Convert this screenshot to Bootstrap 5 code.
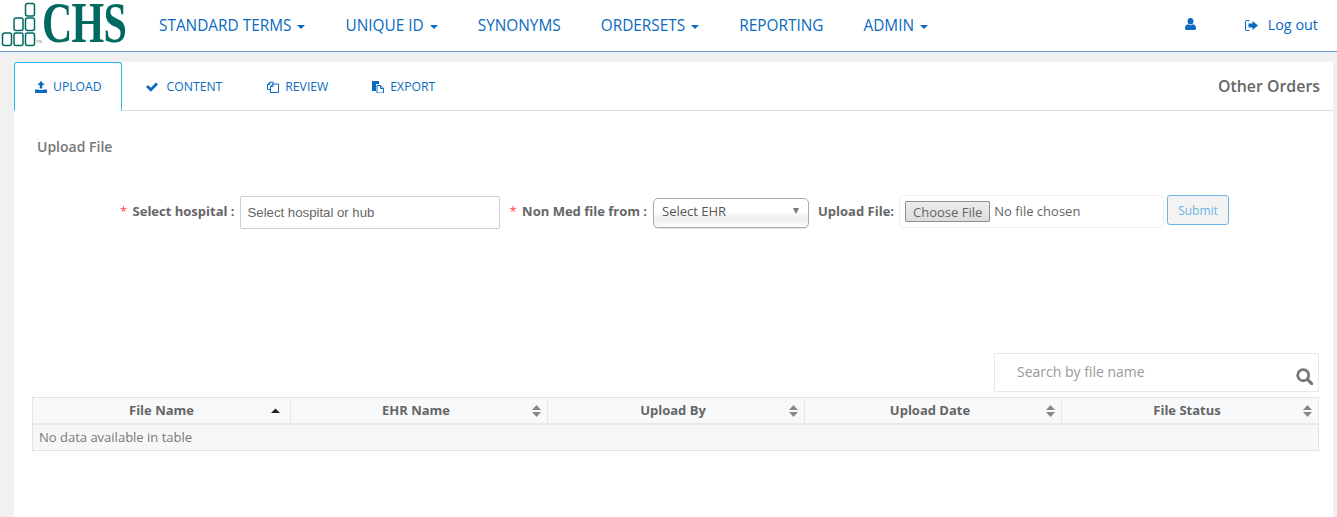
<!DOCTYPE html>
<html lang="en">
<head>
  <meta charset="UTF-8">
  <meta name="viewport" content="width=device-width, initial-scale=1.0">
  <title>Other Orders - Upload</title>
  <link href="https://cdn.jsdelivr.net/npm/bootstrap@5.3.0/dist/css/bootstrap.min.css" rel="stylesheet">
  <style>
    body {
      font-family: "Open Sans", sans-serif;
      background-color: #f1f1f1;
      color: #666;
      font-size: 13px;
      overflow: hidden;
    }

    /* top bar */
    .top-bar {
      height: 52px;
      padding: 0;
      background: #fff;
      border-bottom: 1px solid #6b9fcf;
      flex-wrap: nowrap;
    }
    .brand-box { width: 139px; height: 51px; flex: none; }
    .brand-logo { flex: none; margin-top: 1px; }
    .brand-name {
      font-family: "Liberation Serif", serif;
      font-weight: 700;
      font-size: 56px;
      line-height: 46px;
      color: #006a60;
      flex: none;
      white-space: nowrap;
      transform: scaleX(.75);
      transform-origin: left center;
      letter-spacing: -1px;
      margin: 0 -40px 0 0;
    }
    .top-link {
      color: #0a6abf;
      font-size: 15.38px;
      line-height: 51px;
      padding: 0 20px;
      text-decoration: none;
      white-space: nowrap;
    }
    .top-link:hover { color: #0a6abf; }
    .caret-down {
      display: inline-block;
      border-top: 4px solid #0a6abf;
      border-left: 4px solid transparent;
      border-right: 4px solid transparent;
      margin-left: 6px;
      vertical-align: 2px;
    }
    .icon-user { margin-right: 49px; margin-top: -2px; }
    .logout-link { padding: 0 19px 0 0; font-size: 14.4px; line-height: 50px; }
    .logout-link svg { margin-right: 10px; vertical-align: -1px; }

    /* panel and tabs */
    .main-panel {
      margin: 10px 4px 0 14px;
      height: 455px;
      background: #fff;
    }
    .tab-row { border-bottom: 1px solid #ddd; height: 49px; }
    .tab-row .nav-tabs { border-bottom: 0; flex-wrap: nowrap; }
    .tab-row .nav-item { margin-left: 2px; }
    .tab-row .nav-item:first-child { margin-left: 0; }
    .tab-row .nav-link {
      height: 49px;
      padding: 0 20px;
      border: 1px solid transparent;
      border-radius: 3px 3px 0 0;
      margin: 0;
      color: #0a6abf;
      font-size: 12.2px;
      line-height: 47px;
      white-space: nowrap;
    }
    .tab-row .nav-link svg { margin-right: 6px; vertical-align: -2px; }
    .tab-row .nav-item:first-child .nav-link { padding-right: 19px; }
    .tab-row .nav-item:nth-child(2) .nav-link { padding-right: 21px; }
    .tab-row .nav-link.active {
      border-color: #29b6f6 #29b6f6 #fff;
      color: #0a6abf;
      background: #fff;
    }
    .page-name {
      font-size: 15.9px;
      font-weight: 600;
      color: #666;
      line-height: 49px;
      padding-right: 13px;
    }
    .section-title {
      font-size: 14px;
      font-weight: 600;
      color: #777;
      padding: 26px 0 0 23px;
      line-height: 20px;
    }

    /* upload form */
    .upload-form { padding: 38px 0 0 106px; height: 196px; }
    .field-label {
      font-size: 13px;
      font-weight: 700;
      color: #666;
      white-space: nowrap;
      margin: 7px 0 0;
    }
    .req-star { color: #f44; font-weight: 400; margin-right: 2px; }
    .hospital-input {
      width: 260px;
      height: 33px;
      margin: 1px 0 0 5px;
      padding: 0 7px;
      border: 1px solid #c5d0dc;
      border-radius: 2px;
      font-family: "Liberation Sans", sans-serif;
      font-size: 13.2px;
      color: #666;
    }
    .hospital-input::placeholder { color: #666; opacity: 1; }
    .non-med-label { margin-left: 10px; }
    .ehr-wrap { position: relative; width: 156px; height: 30px; margin: 3px 9px 0 6px; }
    .ehr-select {
      width: 156px;
      height: 30px;
      padding: 0 8px 2px;
      border: 1px solid #aaa;
      border-radius: 5px;
      box-shadow: 0 1px 1px rgba(0, 0, 0, .12);
      background: linear-gradient(#fff 0%, #fff 45%, #eee 68%, #fbfbfb 100%);
      font-size: 13px;
      color: #555;
      appearance: none;
    }
    .ehr-wrap::after {
      content: "";
      position: absolute;
      top: 10px;
      right: 10px;
      border-top: 6px solid #777;
      border-left: 3.5px solid transparent;
      border-right: 3.5px solid transparent;
    }
    .file-box {
      width: 265px;
      height: 33px;
      margin: 0 3px 0 5px;
      padding: 0 5px;
      border: 1px solid #f0f0f0;
      border-radius: 4px;
      font-size: 13px;
      color: #666;
    }
    .file-btn {
      height: 21px;
      padding: 0 7px;
      border: 1px solid #8f8f8f;
      border-radius: 1px;
      background: linear-gradient(#ededed, #dcdcdc);
      font-size: 13px;
      line-height: 18px;
      color: #666;
      margin-right: 4px;
      white-space: nowrap;
    }
    .submit-btn {
      width: 62px;
      height: 30px;
      padding: 1px 0 0;
      border: 1px solid #6db5e5;
      border-radius: 3px;
      background: #f3f3f3;
      color: #6db5e5;
      font-size: 12px;
    }

    /* search and table */
    .file-area { padding: 0 14px 0 18px; }
    .search-box { width: 325px; height: 39px; margin-left: auto; position: relative; }
    .search-input {
      width: 100%;
      height: 39px;
      padding: 0 22px 3px;
      border: 1px solid #e8e8e8;
      border-radius: 0;
      font-size: 14px;
      color: #888;
    }
    .search-input::placeholder { color: #999; opacity: 1; }
    .search-icon { position: absolute; right: 6px; top: 15px; }
    .file-table {
      margin: 5px 0 0;
      table-layout: fixed;
      border: 1px solid #e3e3e3;
      --bs-table-bg: transparent;
    }
    .file-table th {
      position: relative;
      height: 26px;
      padding: 0 12px 0 6px;
      background: #f8f9fa;
      border-bottom: 2px solid #e8e8e8;
      border-right: 1px solid #e9e9e9;
      color: #666;
      font-size: 13px;
      font-weight: 700;
      line-height: 24px;
      text-align: center;
      vertical-align: middle;
    }
    .file-table th:first-child { width: 258px; padding-right: 6px; }
    .file-table td {
      height: 26px;
      padding: 0 6px 1px;
      background: #f7f7f7;
      border-bottom: 1px solid #e3e3e3;
      color: #777;
      font-size: 13px;
      line-height: 24px;
      vertical-align: middle;
    }
    .sort-mark { position: absolute; right: 6px; top: 7px; }
    .sort-first { right: 9px; }
  </style>
</head>
<body>

  <nav class="navbar top-bar d-flex align-items-start">
    <a class="brand-box d-flex text-decoration-none" href="#">
      <svg class="brand-logo" width="42" height="46" viewBox="0 0 42 46" fill="none" stroke="#006a60" stroke-width="1.500">
        <rect x="2.500" y="32" width="9" height="12.500" rx="2"/>
        <rect x="14" y="32" width="9" height="12.500" rx="2"/>
        <rect x="25.500" y="32" width="9" height="12.500" rx="2"/>
        <rect x="14" y="17" width="9" height="12.500" rx="2"/>
        <rect x="25.500" y="17" width="9" height="12.500" rx="2"/>
        <rect x="25.500" y="2.500" width="9" height="12.500" rx="2"/>
        <text x="36" y="42" font-family="Liberation Sans, sans-serif" font-size="4" fill="#777" stroke="none">TM</text>
      </svg>
      <span class="brand-name">CHS</span>
    </a>
    <div class="d-flex flex-grow-1">
      <a class="top-link" href="#">STANDARD TERMS<span class="caret-down"></span></a>
      <a class="top-link" href="#">UNIQUE ID<span class="caret-down"></span></a>
      <a class="top-link" href="#">SYNONYMS</a>
      <a class="top-link" href="#">ORDERSETS<span class="caret-down"></span></a>
      <a class="top-link" href="#">REPORTING</a>
      <a class="top-link" href="#">ADMIN<span class="caret-down"></span></a>
    </div>
    <div class="d-flex align-items-center">
      <svg class="icon-user" width="11" height="12" viewBox="0 0 11 12" fill="#0a6abf">
        <ellipse cx="5.500" cy="3.200" rx="2.900" ry="3.200"/>
        <path d="M0 10.200C0 7.800 1.400 6.600 3 6.300c.7.6 1.500.9 2.500.9s1.800-.3 2.500-.9c1.600.3 3 1.500 3 3.900C11 11.300 10.300 12 9.300 12H1.700C.7 12 0 11.300 0 10.200z"/>
      </svg>
      <a class="top-link logout-link" href="#">
        <svg width="13" height="11" viewBox="0 0 13 11" fill="#0a6abf">
          <path d="M4.500 0H2C.9 0 0 .9 0 2v7c0 1.100.9 2 2 2h2.500v-1H2c-.6 0-1-.4-1-1V2c0-.6.4-1 1-1h2.500z"/>
          <path d="M7.500 1v2.500H3.500v4h4V10L13 5.500z"/>
        </svg>Log out
      </a>
    </div>
  </nav>

  <div class="main-panel">
    <div class="tab-row d-flex justify-content-between">
      <ul class="nav nav-tabs">
        <li class="nav-item">
          <a class="nav-link active" href="#">
            <svg width="12" height="12" viewBox="0 0 12 12" fill="#0a6abf">
              <path d="M6 0l3.500 4H7.300v3.500H4.700V4H2.500z"/>
              <path d="M0 8.500h3.700v.4h4.600v-.4H12V12H0z"/>
            </svg>UPLOAD
          </a>
        </li>
        <li class="nav-item">
          <a class="nav-link" href="#">
            <svg width="16" height="12" viewBox="0 0 16 12" fill="#0a6abf">
              <path d="M1 6l2-2 2.800 2.800L11 1.500l2 2-7.200 7.200z"/>
            </svg>CONTENT
          </a>
        </li>
        <li class="nav-item">
          <a class="nav-link" href="#">
            <svg width="12" height="12" viewBox="0 0 12 12" fill="none" stroke="#0a6abf" stroke-width="1">
              <path d="M.5 3.500L3 1h3v2.500M.5 3.500v5h3M.5 3.500H3V1"/>
              <path d="M3.500 5.500L6 3h5.500v8.500h-8zM3.500 5.500H6V3"/>
            </svg>REVIEW
          </a>
        </li>
        <li class="nav-item">
          <a class="nav-link" href="#">
            <svg width="12" height="12" viewBox="0 0 12 12" fill="#0a6abf">
              <path d="M0 0h7v3H4v7H0z"/>
              <path d="M5 4.500h3.500L11.500 7.500V12H5z" fill="#fff" stroke="#0a6abf"/>
              <path d="M8.500 4.500V7.500h3" fill="none" stroke="#0a6abf"/>
            </svg>EXPORT
          </a>
        </li>
      </ul>
      <div class="page-name">Other Orders</div>
    </div>

    <div class="section-title">Upload File</div>

    <form class="upload-form d-flex align-items-start">
      <label class="field-label"><span class="req-star">*</span>&nbsp;Select hospital :</label>
      <input class="form-control hospital-input" type="text" placeholder="Select hospital or hub">
      <label class="field-label non-med-label"><span class="req-star">*</span>&nbsp;Non Med file from :</label>
      <div class="ehr-wrap">
        <select class="ehr-select"><option>Select EHR</option></select>
      </div>
      <label class="field-label">Upload File:</label>
      <div class="file-box d-flex align-items-center">
        <button class="file-btn" type="button">Choose File</button>
        <span>No file chosen</span>
      </div>
      <button class="btn submit-btn" type="button">Submit</button>
    </form>

    <div class="file-area">
      <div class="search-box">
        <input class="form-control search-input" type="text" placeholder="Search by file name">
        <svg class="search-icon" width="17" height="17" viewBox="0 0 16 16" fill="none" stroke="#777" stroke-width="2.600">
          <circle cx="6.800" cy="6.800" r="5.200"/>
          <path d="M10.800 10.800L15 15" stroke-width="3" stroke-linecap="round"/>
        </svg>
      </div>
      <table class="table file-table">
        <thead>
          <tr>
            <th>File Name
              <svg class="sort-mark sort-first" width="11" height="12" viewBox="0 0 11 12" fill="#222"><path d="M5.500 3.500L10 8H1z"/></svg>
            </th>
            <th>EHR Name
              <svg class="sort-mark" width="9" height="12" viewBox="0 0 9 12" fill="#888"><path d="M4.500 0L9 5H0zM4.500 12L0 7h9z"/></svg>
            </th>
            <th>Upload By
              <svg class="sort-mark" width="9" height="12" viewBox="0 0 9 12" fill="#888"><path d="M4.500 0L9 5H0zM4.500 12L0 7h9z"/></svg>
            </th>
            <th>Upload Date
              <svg class="sort-mark" width="9" height="12" viewBox="0 0 9 12" fill="#888"><path d="M4.500 0L9 5H0zM4.500 12L0 7h9z"/></svg>
            </th>
            <th>File Status
              <svg class="sort-mark" width="9" height="12" viewBox="0 0 9 12" fill="#888"><path d="M4.500 0L9 5H0zM4.500 12L0 7h9z"/></svg>
            </th>
          </tr>
        </thead>
        <tbody>
          <tr><td colspan="5">No data available in table</td></tr>
        </tbody>
      </table>
    </div>
  </div>

  <script src="https://cdn.jsdelivr.net/npm/bootstrap@5.3.0/dist/js/bootstrap.bundle.min.js"></script>
</body>
</html>
